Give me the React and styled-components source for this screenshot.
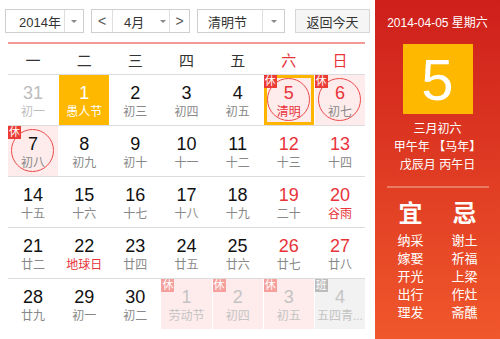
import React from 'react';
import styled, { createGlobalStyle } from 'styled-components';

const Global = createGlobalStyle`
body {
  margin: 0;
  background: #fff;
  font-family: "Liberation Sans", "Noto Sans CJK SC", sans-serif;
}
`

const Page = styled.div`
display: flex;
width: 500px;
height: 339px;
overflow: hidden;
`

const Left = styled.div`
width: 375px;
flex: none;
`

const Toolbar = styled.div`
display: flex;
align-items: center;
height: 24px;
margin: 9px 0 0 5px;
`

const Box = styled.div`
display: flex;
height: 24px;
box-sizing: border-box;
border: 1px solid #cfcfcf;
background: #fff;
margin-right: ${p => p.gap || 7}px;
font-size: 13px;
color: #333;
`

const Part = styled.div`
display: flex;
align-items: center;
justify-content: ${p => p.center ? 'center' : 'flex-start'};
width: ${p => p.w}px;
padding-left: ${p => p.pad || 0}px;
box-sizing: border-box;
border-left: ${p => p.line ? '1px solid #dedede' : 'none'};
`

const Arrow = styled.span`
width: 0;
height: 0;
border-left: 3px solid transparent;
border-right: 3px solid transparent;
border-top: 3px solid #888;
margin-left: ${p => p.ml || 0}px;
`

const Chevron = styled.span`
font-size: 14px;
color: #555;
`

const TodayBtn = styled.div`
width: 75px;
height: 24px;
box-sizing: border-box;
border: 1px solid #d6d6d6;
background: #f5f5f5;
display: flex;
align-items: center;
justify-content: center;
font-size: 13px;
color: #333;
`

const RedLine = styled.div`
height: 2px;
background: #f39a98;
margin: 9px 10px 0 8px;
`

const Weekdays = styled.div`
display: grid;
grid-template-columns: repeat(7, 1fr);
column-gap: 1px;
margin-left: 8px;
width: 357px;
height: 30px;
border-bottom: 1px solid #dcdcdc;
`

const Weekday = styled.div`
display: flex;
align-items: center;
justify-content: center;
font-size: 15px;
color: ${p => p.red ? '#e8333a' : '#333'};
`

const Row = styled.div`
display: grid;
grid-template-columns: repeat(7, 1fr);
column-gap: 1px;
margin-left: 8px;
width: 357px;
height: 50px;
border-bottom: ${p => p.last ? 'none' : '1px solid #dcdcdc'};
`

const Cell = styled.div`
position: relative;
display: flex;
flex-direction: column;
align-items: center;
padding-top: ${p => p.selected ? 5 : 8}px;
box-sizing: border-box;
background: ${p => p.bg};
border: ${p => p.selected ? '3px solid #ffb400' : 'none'};
`

const Num = styled.div`
font-size: 18px;
line-height: 20px;
color: ${p => p.color};
`

const Lunar = styled.div`
font-size: 12px;
line-height: 17px;
margin-top: 1px;
color: ${p => p.color};
white-space: nowrap;
`

const Badge = styled.div`
position: absolute;
left: ${p => p.off}px;
top: ${p => p.off}px;
width: 13px;
height: 13px;
background: ${p => p.bg};
color: #fff;
font-size: 11px;
line-height: 13px;
text-align: center;
`

const Circle = styled.div`
position: absolute;
left: 50%;
top: 50%;
width: 43px;
height: 43px;
margin: -22px 0 0 -22px;
border: 1px solid #eb4a4a;
border-radius: 50%;
box-sizing: border-box;
`

const Side = styled.div`
width: 125px;
flex: none;
background: linear-gradient(#ce1f1b, #f0572b);
color: #fff;
display: flex;
flex-direction: column;
align-items: center;
`

const SideDate = styled.div`
font-size: 12px;
margin-top: 15px;
line-height: 16px;
`

const BigDay = styled.div`
width: 70px;
height: 70px;
margin-top: 13px;
background: #ffb800;
display: flex;
align-items: center;
justify-content: center;
font-size: 58px;
`

const SideLine = styled.div`
font-size: 12px;
line-height: 18px;
margin-top: ${p => p.mt || 0}px;
`

const Divider = styled.div`
width: 102px;
height: 2px;
background: #ea7a64;
margin-top: 12px;
`

const YiJi = styled.div`
display: grid;
grid-template-columns: 54px 54px;
margin-top: 12px;
justify-items: center;
`

const Big = styled.div`
font-size: 24px;
font-weight: bold;
line-height: 28px;
margin-bottom: 4px;
`

const Item = styled.div`
font-size: 13px;
line-height: 18px;
`

const rows = [
  [
    { d: 31, l: '初一', k: 'other' },
    { d: 1, l: '愚人节', k: 'today' },
    { d: 2, l: '初三' },
    { d: 3, l: '初四' },
    { d: 4, l: '初五' },
    { d: 5, l: '清明', fest: true, rest: true, circle: true, selected: true },
    { d: 6, l: '初七', rest: true, circle: true },
  ],
  [
    { d: 7, l: '初八', rest: true, circle: true },
    { d: 8, l: '初九' },
    { d: 9, l: '初十' },
    { d: 10, l: '十一' },
    { d: 11, l: '十二' },
    { d: 12, l: '十三' },
    { d: 13, l: '十四' },
  ],
  [
    { d: 14, l: '十五' },
    { d: 15, l: '十六' },
    { d: 16, l: '十七' },
    { d: 17, l: '十八' },
    { d: 18, l: '十九' },
    { d: 19, l: '二十' },
    { d: 20, l: '谷雨', fest: true },
  ],
  [
    { d: 21, l: '廿二' },
    { d: 22, l: '地球日', fest: true },
    { d: 23, l: '廿四' },
    { d: 24, l: '廿五' },
    { d: 25, l: '廿六' },
    { d: 26, l: '廿七' },
    { d: 27, l: '廿八' },
  ],
  [
    { d: 28, l: '廿九' },
    { d: 29, l: '初一' },
    { d: 30, l: '初二' },
    { d: 1, l: '劳动节', k: 'next', rest: true },
    { d: 2, l: '初四', k: 'next', rest: true },
    { d: 3, l: '初五', k: 'next', rest: true },
    { d: 4, l: '五四青...', k: 'next', work: true },
  ],
];

function Day({ c, col }) {
  const weekend = col >= 5;
  let bg = 'transparent';
  let num = weekend ? '#e8333a' : '#111';
  let lunar = c.fest ? '#e8333a' : '#888';
  if (c.k === 'today') {
    bg = '#ffb800';
    num = '#fff';
    lunar = '#fff';
  } else if (c.k === 'other') {
    num = '#bdbdbd';
    lunar = '#bdbdbd';
  } else if (c.k === 'next') {
    bg = c.work ? '#f2f2f2' : '#fdeceb';
    num = '#c4c4c4';
    lunar = '#c4c4c4';
  } else if (c.rest) {
    bg = '#fdeceb';
  }
  const faded = c.k === 'next';
  return (
    <Cell bg={bg} selected={c.selected}>
      {c.rest && <Badge bg={faded ? '#f5a09c' : '#ec3b34'} off={c.selected ? -3 : 0}>休</Badge>}
      {c.work && <Badge bg="#bcbcbc" off={0}>班</Badge>}
      {c.circle && <Circle />}
      <Num color={num}>{c.d}</Num>
      <Lunar color={lunar}>{c.l}</Lunar>
    </Cell>
  );
}

export default function App() {
  const week = ['一', '二', '三', '四', '五', '六', '日'];
  return (
    <Page>
      <Global />
      <Left>
        <Toolbar>
          <Box>
            <Part w={58} pad={13}>2014年</Part>
            <Part w={19} line center><Arrow /></Part>
          </Box>
          <Box>
            <Part w={20} center><Chevron>&lt;</Chevron></Part>
            <Part w={57} line pad={11}>4月<Arrow ml={16} /></Part>
            <Part w={20} line center><Chevron>&gt;</Chevron></Part>
          </Box>
          <Box gap={10}>
            <Part w={64} pad={10}>清明节</Part>
            <Part w={22} line center><Arrow /></Part>
          </Box>
          <TodayBtn>返回今天</TodayBtn>
        </Toolbar>
        <RedLine />
        <Weekdays>
          {week.map((w, i) => <Weekday key={w} red={i >= 5}>{w}</Weekday>)}
        </Weekdays>
        {rows.map((r, ri) => (
          <Row key={ri} last={ri === rows.length - 1}>
            {r.map((c, ci) => <Day key={ci} c={c} col={ci} />)}
          </Row>
        ))}
      </Left>
      <Side>
        <SideDate>2014-04-05 星期六</SideDate>
        <BigDay>5</BigDay>
        <SideLine mt={6}>三月初六</SideLine>
        <SideLine>甲午年 【马年】</SideLine>
        <SideLine>戊辰月 丙午日</SideLine>
        <Divider />
        <YiJi>
          <Big>宜</Big>
          <Big>忌</Big>
          <div>
            {['纳采', '嫁娶', '开光', '出行', '理发'].map(t => <Item key={t}>{t}</Item>)}
          </div>
          <div>
            {['谢土', '祈福', '上梁', '作灶', '斋醮'].map(t => <Item key={t}>{t}</Item>)}
          </div>
        </YiJi>
      </Side>
    </Page>
  );
}
